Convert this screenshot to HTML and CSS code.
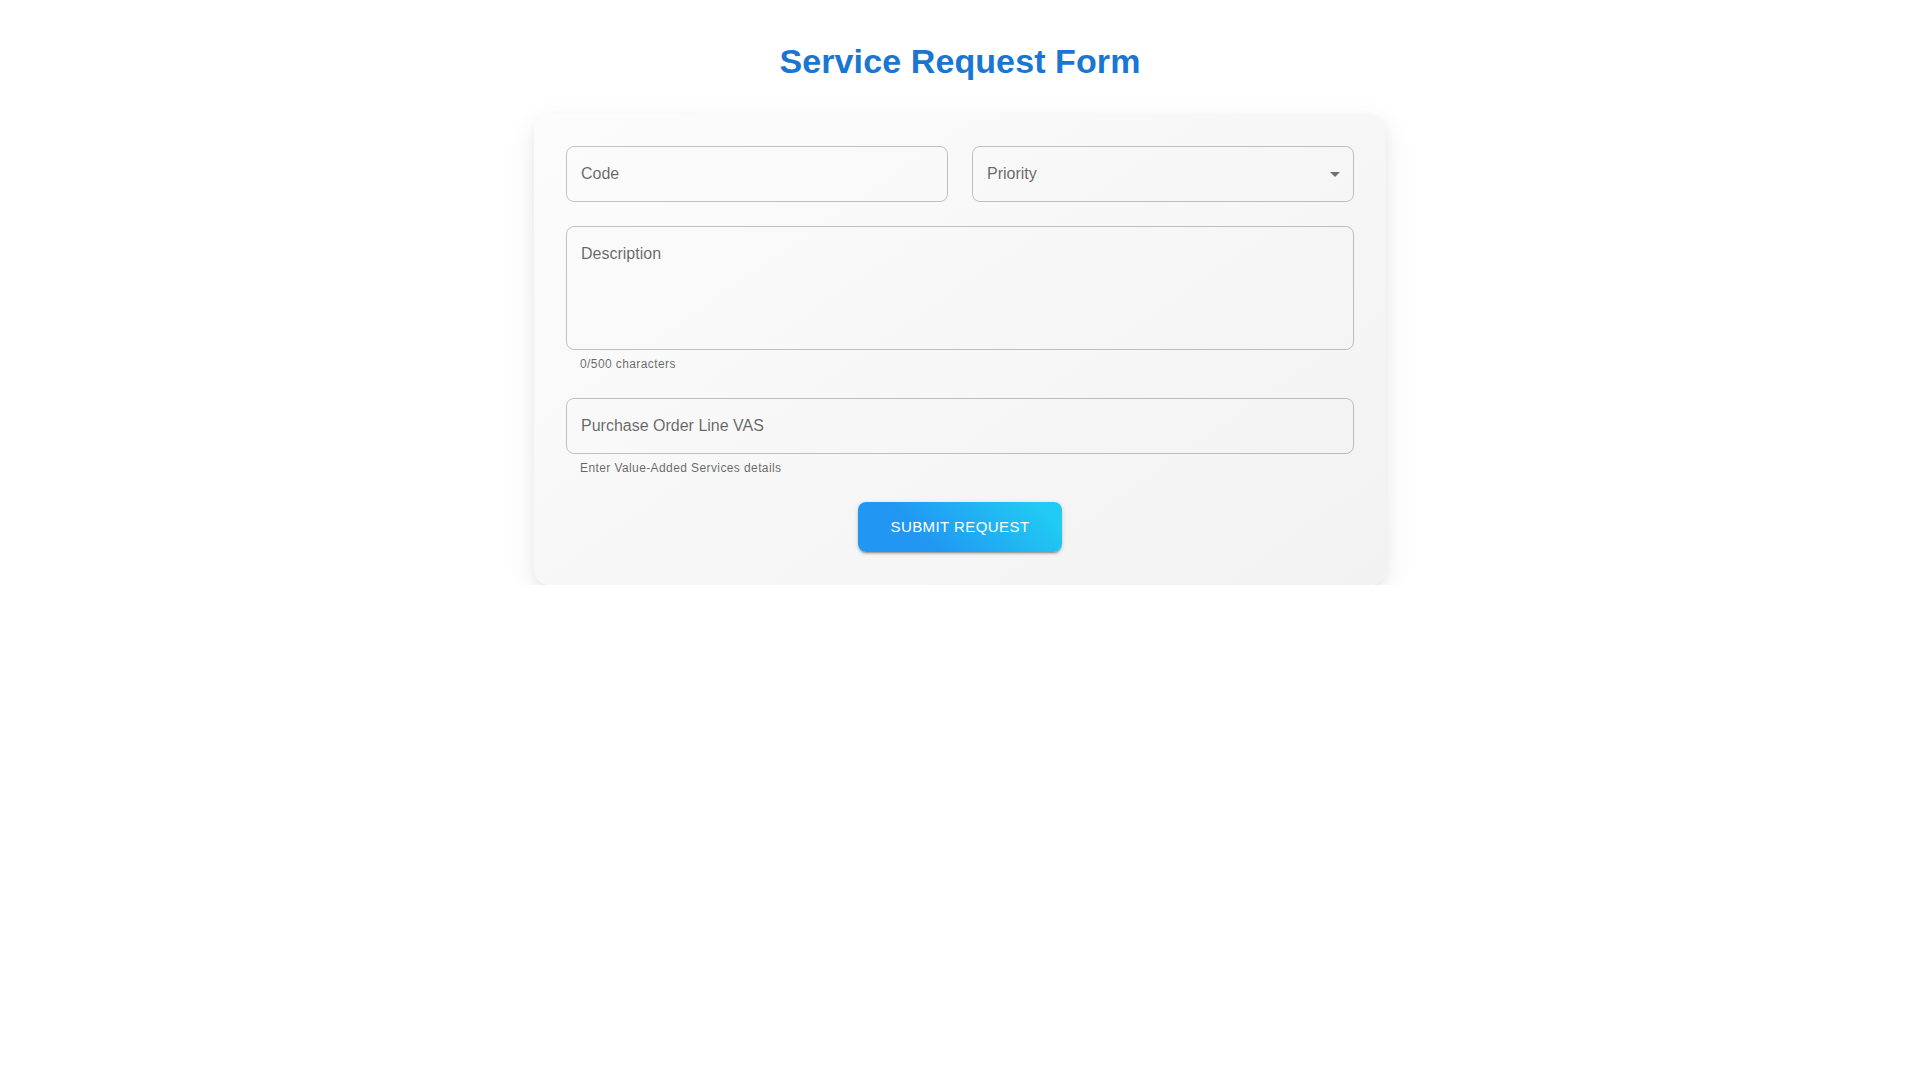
FILE: index.html
```html
<!DOCTYPE html>
<html lang="en">
<head>
    <meta charset="UTF-8">
    <meta name="viewport" content="width=device-width, initial-scale=1.0">
    <title>Service Request Form</title>
    <link rel="stylesheet" href="styles.css">
</head>
<body>
    <div class="page">
        <h1 class="form-title">Service Request Form</h1>
        <form class="form-card" onsubmit="return false;">
            <div class="form-grid">
                <div class="field">
                    <input class="field-input" type="text" name="code" placeholder="Code">
                </div>
                <div class="field field-select">
                    <select class="field-input select-input" name="priority">
                        <option value="" selected>Priority</option>
                        <option value="low">Low</option>
                        <option value="medium">Medium</option>
                        <option value="high">High</option>
                    </select>
                    <svg class="select-arrow" viewBox="0 0 24 24" width="24" height="24"><path d="M7 10l5 5 5-5z"/></svg>
                </div>
                <div class="field field-wide">
                    <textarea class="field-input field-area" name="description" maxlength="500" placeholder="Description"></textarea>
                    <div class="helper-text">0/500 characters</div>
                </div>
                <div class="field field-wide">
                    <input class="field-input" type="text" name="vas" placeholder="Purchase Order Line VAS">
                    <div class="helper-text">Enter Value-Added Services details</div>
                </div>
                <div class="field field-wide actions">
                    <button class="submit-button" type="submit">Submit Request</button>
                </div>
            </div>
        </form>
    </div>
</body>
</html>
```

FILE: styles.css
```css
body {
    margin: 0;
    background: #fff;
    font-family: "Liberation Sans", Arial, sans-serif;
}
.page {
    padding-top: 40px;
}
.form-title {
    margin: 0 0 32px;
    font-size: 34px;
    line-height: 42px;
    font-weight: 700;
    letter-spacing: 0.1px;
    color: #1976d2;
    text-align: center;
}
.form-card {
    width: 852px;
    box-sizing: border-box;
    margin: 0 auto;
    padding: 32px 32px 33px;
    border-radius: 16px;
    background: linear-gradient(145deg, #fcfcfc 0%, #f2f2f2 100%);
    box-shadow: 0 10px 30px rgba(0, 0, 0, 0.08), 0 4px 10px rgba(0, 0, 0, 0.05);
}
.form-grid {
    display: grid;
    grid-template-columns: 1fr 1fr;
    gap: 24px;
}
.field {
    position: relative;
}
.field-wide {
    grid-column: 1 / -1;
}
.field-input {
    display: block;
    width: 100%;
    height: 56px;
    box-sizing: border-box;
    padding: 16.5px 14px;
    border: 1px solid rgba(0, 0, 0, 0.23);
    border-radius: 8px;
    background: transparent;
    font-family: inherit;
    font-size: 16px;
    color: rgba(0, 0, 0, 0.87);
    outline: none;
}
.field-input::placeholder {
    color: rgba(0, 0, 0, 0.6);
    opacity: 1;
}
.select-input {
    appearance: none;
    -webkit-appearance: none;
    color: rgba(0, 0, 0, 0.6);
    padding: 15.5px 32px 17.5px 14px;
}
.select-arrow {
    position: absolute;
    right: 7px;
    top: 16px;
    fill: rgba(0, 0, 0, 0.54);
    pointer-events: none;
}
.field-area {
    height: 124px;
    padding-top: 15px;
    line-height: 23px;
    resize: none;
}
.helper-text {
    margin: 4px 14px 0;
    font-size: 12px;
    line-height: 20px;
    letter-spacing: 0.4px;
    color: rgba(0, 0, 0, 0.6);
}
.actions {
    display: flex;
    justify-content: center;
}
.submit-button {
    padding: 12px 32px;
    border: none;
    border-radius: 8px;
    background: linear-gradient(45deg, #2196f3 30%, #21cbf3 90%);
    color: #fff;
    font-family: inherit;
    font-size: 15px;
    line-height: 26px;
    letter-spacing: 0.43px;
    text-transform: uppercase;
    cursor: pointer;
    box-shadow: 0 3px 1px -2px rgba(0, 0, 0, 0.2), 0 2px 2px 0 rgba(0, 0, 0, 0.14), 0 1px 5px 0 rgba(0, 0, 0, 0.12);
}
```
